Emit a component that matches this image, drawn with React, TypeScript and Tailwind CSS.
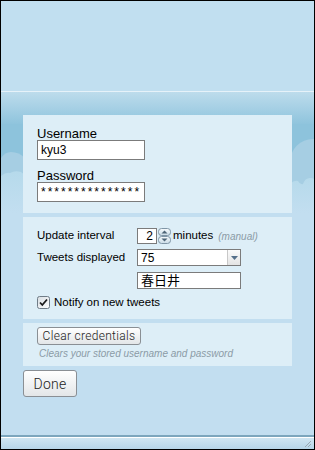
import React from 'react'

// Settings panel of a small desktop twitter client

const font = { fontFamily: '"Liberation Sans", Arial, "Noto Sans CJK JP", sans-serif' }
const btnFont = { fontFamily: 'Roboto, "Noto Sans CJK JP", sans-serif' }

function CloudBackdrop() {
  return (
    <svg className="absolute left-0 top-0" width="313" height="121" viewBox="0 0 313 121">
      <defs>
        <linearGradient id="sky" x1="0" y1="0" x2="0" y2="1">
          <stop offset="0" stopColor="#bddcec" />
          <stop offset="1" stopColor="#8fc4dd" />
        </linearGradient>
        <linearGradient id="cloudLow" x1="0" y1="0" x2="0" y2="1">
          <stop offset="0" stopColor="#b6daeb" />
          <stop offset="1" stopColor="#c2def0" />
        </linearGradient>
      </defs>
      <rect x="0" y="0" width="313" height="32" fill="url(#sky)" />
      <rect x="0" y="32" width="313" height="89" fill="#8dc3dc" />
      {/* left clouds */}
      <path d="M0 66 Q4 60 10 60 Q18 60 24 66 L24 121 L0 121 Z" fill="#a6cee3" />
      <path d="M0 84 Q5 80 9 81 Q14 78 20 80 Q23 82 24 84 L24 121 L0 121 Z" fill="url(#cloudLow)" />
      {/* right clouds */}
      <circle cx="312" cy="70" r="23" fill="#a6cee3" />
      <rect x="289" y="70" width="24" height="51" fill="#a6cee3" />
      <path d="M289 92 Q293 88 297 89 Q299 93 302 92 Q304 86 309 86 Q312 86 313 87 L313 121 L289 121 Z" fill="url(#cloudLow)" />
    </svg>
  )
}

function SpinButtons() {
  return (
    <svg width="13" height="16" viewBox="0 0 13 16" className="ml-[1px]">
      <defs>
        <linearGradient id="spin" x1="0" y1="0" x2="0" y2="1">
          <stop offset="0" stopColor="#f7fbfd" />
          <stop offset="1" stopColor="#c9dbe6" />
        </linearGradient>
      </defs>
      <rect x="0.5" y="0.5" width="12" height="7" rx="3" fill="url(#spin)" stroke="#7f95a6" />
      <rect x="0.5" y="8.5" width="12" height="7" rx="3" fill="url(#spin)" stroke="#7f95a6" />
      <path d="M3.5 5.5 L6.5 2.5 L9.5 5.5 Z" fill="#4d6477" />
      <path d="M3.5 10.5 L6.5 13.5 L9.5 10.5 Z" fill="#4d6477" />
    </svg>
  )
}

function Checkbox() {
  return (
    <svg width="13" height="13" viewBox="0 0 13 13">
      <defs>
        <linearGradient id="chk" x1="0" y1="0" x2="1" y2="1">
          <stop offset="0" stopColor="#d7dde2" />
          <stop offset="1" stopColor="#ffffff" />
        </linearGradient>
      </defs>
      <rect x="0.5" y="0.5" width="12" height="12" rx="2" fill="url(#chk)" stroke="#6f7c87" />
      <path d="M3 6.5 L5.3 9 L10 3.5" fill="none" stroke="#1b1b1b" strokeWidth="1.8" />
    </svg>
  )
}

export default function App() {
  return (
    <div className="flex h-[450px] w-[315px] flex-col border border-black bg-[#c2def0] text-black" style={font}>
      <div className="h-[90px] bg-[#c1dff0]" />
      <div className="h-px bg-[#e6f2f9]" />

      <div className="relative flex-1 px-[22px] pt-[23px]">
        <CloudBackdrop />

        <div className="relative flex flex-col gap-[4px]">
          {/* credentials */}
          <div className="flex flex-col bg-[#ddeef7] px-[14px] pb-[11px] pt-[12px]">
            <div className="h-[13px] text-[13px] leading-[13px]">Username</div>
            <div className="flex h-[20px] w-[108px] items-center border border-[#7b7b7b] bg-white pl-[3px] text-[12px]">kyu3</div>
            <div className="mt-[9px] h-[13px] text-[13px] leading-[13px]">Password</div>
            <div className="flex h-[20px] w-[108px] items-center overflow-hidden border border-[#7b7b7b] bg-white pl-[3px] text-[12px] tracking-[2px]">
              ***************
            </div>
          </div>

          {/* options */}
          <div className="flex flex-col bg-[#ddeef7] px-[14px] pb-[10px] pt-[11px] text-[11.5px]">
            <div className="flex h-[16px] items-center">
              <span className="w-[100px]">Update interval</span>
              <div className="flex h-[16px] w-[20px] items-center justify-end border border-[#7b7b7b] bg-white pr-[3px] text-[12px]">2</div>
              <SpinButtons />
              <span className="ml-[2px]">minutes</span>
              <span className="ml-[5px] text-[10px] italic text-[#8b9ba6]">(manual)</span>
            </div>
            <div className="mt-[5px] flex h-[17px] items-center">
              <span className="w-[100px]">Tweets displayed</span>
              <div className="flex h-[17px] w-[104px] items-center border border-[#7b7b7b] bg-white text-[12px]">
                <span className="flex-1 pl-[3px]">75</span>
                <div className="flex h-full w-[13px] items-center justify-center border-l border-[#c8c8c8] bg-gradient-to-b from-[#fbfbfb] to-[#e4e4e4]">
                  <svg width="7" height="4" viewBox="0 0 7 4">
                    <path d="M0 0 L7 0 L3.5 4 Z" fill="#56708a" />
                  </svg>
                </div>
              </div>
            </div>
            <div className="mt-[6px] flex h-[17px] items-center">
              <span className="w-[100px]" />
              <div className="flex h-[17px] w-[104px] items-center border border-[#7b7b7b] bg-white pl-[3px] text-[13px]">
                春日井
              </div>
            </div>
            <label className="mt-[7px] flex h-[13px] items-center gap-[4px]">
              <Checkbox />
              <span>Notify on new tweets</span>
            </label>
          </div>

          {/* clear */}
          <div className="flex flex-col bg-[#ddeef7] px-[14px] pb-[5px] pt-[4px]">
            <button
              className="flex h-[18px] w-[104px] items-center justify-center rounded-[3px] border border-[#8a8f94] bg-gradient-to-b from-white to-[#e3e6e8] text-[12px] font-light leading-none tracking-[0.3px] text-[#222]"
              style={btnFont}
            >
              Clear credentials
            </button>
            <div className="mt-[2px] pl-[2px] text-[10px] italic leading-[14px] text-[#8b9ba6]">
              Clears your stored username and password
            </div>
          </div>
        </div>

        <button
          className="relative mt-[4px] flex h-[27px] w-[54px] items-center justify-center rounded-[3px] border border-[#8a8f94] bg-gradient-to-b from-white to-[#e3e6e8] text-[14px] font-light leading-none tracking-[0.3px] text-[#222]"
          style={btnFont}
        >
          Done
        </button>
      </div>

      {/* status bar */}
      <div className="h-[2px] bg-[#7ca6bd]" />
      <div className="h-px bg-white" />
      <div className="flex h-[11px] items-end justify-end bg-gradient-to-b from-[#cfe5f2] to-[#b6d5e8] pb-[1px] pr-[2px]">
        <svg width="8" height="8" viewBox="0 0 8 8">
          <path d="M7 1 L1 7 M7 4 L4 7" stroke="#9aaab5" strokeWidth="1" />
        </svg>
      </div>
    </div>
  )
}
